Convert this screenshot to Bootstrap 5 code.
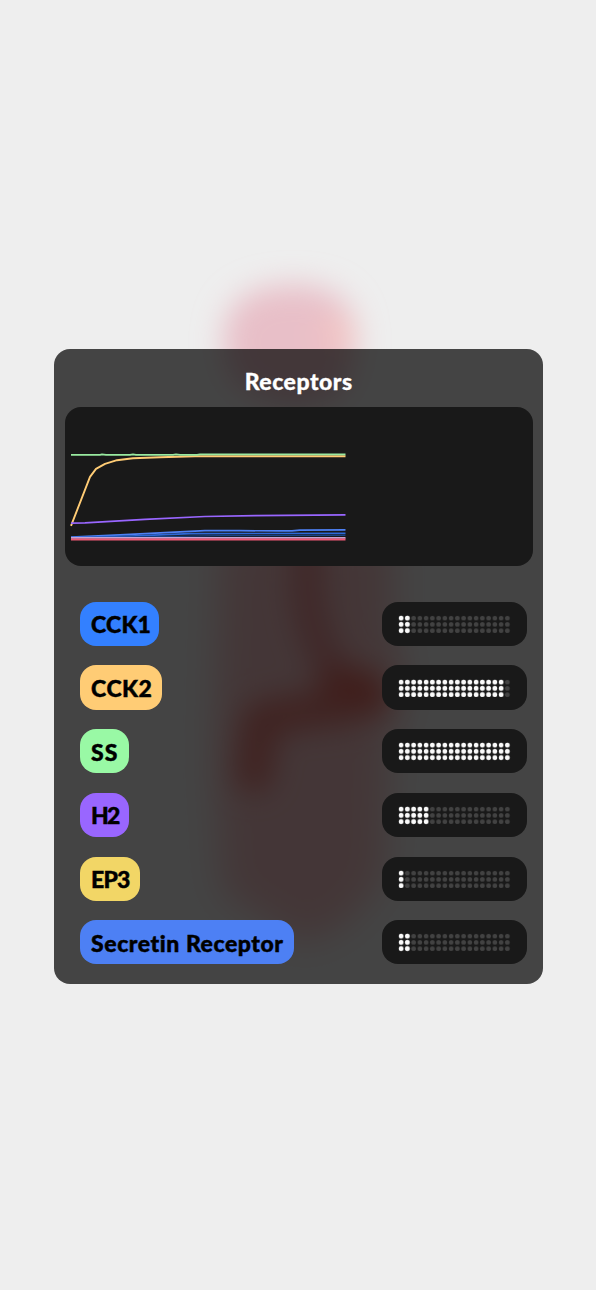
<!DOCTYPE html>
<html lang="en">
<head>
<meta charset="utf-8">
<meta name="viewport" content="width=device-width, initial-scale=1">
<title>Receptors</title>
<link href="https://cdn.jsdelivr.net/npm/bootstrap@5.3.0/dist/css/bootstrap.min.css" rel="stylesheet">
<style>
body{background:#eee;height:1290px;font-family:Lato,"Noto Sans",sans-serif;font-weight:900;overflow:hidden}
.stage{height:1290px;padding:348.7px 52.7px 0 54px}
.backdrop{left:0;top:0}
.panel{height:635.6px;background:rgba(0,0,0,.715);border-radius:16px;padding:0 10.5px}
.panel-title{height:58px;padding-top:7px;font-size:23px;line-height:1;font-weight:900;letter-spacing:.5px;color:#fff;-webkit-text-stroke:.3px #fff}
.chart{height:159px;background:#191919;border-radius:16px}
.rows{margin-top:36.1px;padding:0 5.4px 0 15.6px;gap:19.6px}
.pill{height:44.1px;border-radius:16px;font-size:23px;line-height:1;color:#000;padding:2px 0 0 11px;-webkit-text-stroke:.45px #000}
.meter{height:44.1px;width:145.3px;border-radius:16px;background:#191919;padding:1px 0 0 16.2px}
.cck1{width:79.1px;background:#3380ff;letter-spacing:.2px}
.cck2{width:82.1px;background:#ffcc75;letter-spacing:.5px}
.ss{width:49.1px;background:#99f9a5;letter-spacing:.9px}
.h2r{width:48.7px;background:#9966ff;letter-spacing:-1.8px}
.ep3{width:60.2px;background:#f2d666;letter-spacing:-.8px}
.secretin{width:214.1px;background:#4d80f4;letter-spacing:.55px}
.next{width:56px;background:#8585a8}
</style>
</head>
<body>
<svg class="backdrop position-absolute" width="596" height="1290" viewBox="0 0 596 1290" aria-hidden="true">
  <defs>
    <filter id="soft" x="-50%" y="-50%" width="200%" height="200%"><feGaussianBlur stdDeviation="15"/></filter>
    <filter id="wide" x="-50%" y="-50%" width="200%" height="200%"><feGaussianBlur stdDeviation="19"/></filter>
    <pattern id="off" width="6.25" height="6.25" patternUnits="userSpaceOnUse"><circle cx="3.125" cy="3.125" r="2.3" fill="#424242"/></pattern>
    <pattern id="on" width="6.25" height="6.25" patternUnits="userSpaceOnUse"><circle cx="3.125" cy="3.125" r="2.35" fill="#fafafa"/></pattern>
  </defs>
  <g filter="url(#soft)">
    <path d="M224 350C219 302 250 286 292 285C335 284 361 304 356 350L345 390Q290 425 232 380Z" fill="#e8bfc8"/>
    <ellipse cx="337" cy="335" rx="18" ry="20" fill="#f3c4c3"/>
  </g>
  <g filter="url(#wide)">
    <path d="M220 535H393V620L405 700L388 740L384 880L345 925L302 945L260 915L222 895L214 760Z" fill="#edbdc0"/>
  </g>
  <g filter="url(#soft)" fill="none" stroke-linecap="round" stroke-linejoin="round">
    <path d="M307 525V590Q311 640 338 677" stroke="#dc8788" stroke-width="29"/>
    <path d="M340 688L366 694" stroke="#dd6257" stroke-width="43"/>
    <path d="M346 707Q290 712 260 720L254 775" stroke="#dd7771" stroke-width="34"/>
  </g>
</svg>
<main class="stage position-relative">
  <section class="panel overflow-hidden d-flex flex-column">
    <h1 class="panel-title d-flex align-items-center justify-content-center m-0 flex-shrink-0">Receptors</h1>
    <div class="chart flex-shrink-0">
      <svg class="d-block" width="468" height="159" viewBox="65 407.1 468 159" fill="none" stroke-width="1.7" stroke-linejoin="round">
        <path d="M71 537.3L120 535L160 533L205 530.8H240L280 531H292L300 530.2L345.5 529.9" stroke="#4d80f4"/>
        <path d="M71 537.8L130 536.3L190 533.8L250 533.6L345.5 533.4" stroke="#2c68d8"/>
        <path d="M71 538L160 536.8L220 535.8L345.5 535.5" stroke="#174384" stroke-width="1.2"/>
        <path d="M71 538H345.5" stroke="#c6a2d2"/>
        <path d="M71 539.6H345.5" stroke="#ee5975" stroke-width="2"/>
        <path d="M71 526L90 477L96 469L105 464L117 460.3L133 458.4L160 457.3L195 456.4H345.5" stroke="#ffcc75" stroke-width="1.9"/>
        <path d="M71 523.3L85 523L145 519.4L205 516.6L255 515.8L345.5 515" stroke="#9966ff"/>
        <path d="M71 455H100L102 454.5L106 455H130L133 454.5L136 455H173L176 454.5L180 455H197L200 454.5H345.5" stroke="#99eaa0"/>
      </svg>
    </div>
    <div class="rows d-flex flex-column">
      <div class="d-flex justify-content-between"><div class="pill cck1 d-flex align-items-center">CCK1</div><div class="meter d-flex align-items-center"><svg width="112.5" height="18.75"><rect width="112.5" height="18.75" fill="url(#off)"/><rect width="12.5" height="18.75" fill="url(#on)"/></svg></div></div>
      <div class="d-flex justify-content-between"><div class="pill cck2 d-flex align-items-center">CCK2</div><div class="meter d-flex align-items-center"><svg width="112.5" height="18.75"><rect width="112.5" height="18.75" fill="url(#off)"/><rect width="106.25" height="18.75" fill="url(#on)"/></svg></div></div>
      <div class="d-flex justify-content-between"><div class="pill ss d-flex align-items-center">SS</div><div class="meter d-flex align-items-center"><svg width="112.5" height="18.75"><rect width="112.5" height="18.75" fill="url(#on)"/></svg></div></div>
      <div class="d-flex justify-content-between"><div class="pill h2r d-flex align-items-center">H2</div><div class="meter d-flex align-items-center"><svg width="112.5" height="18.75"><rect width="112.5" height="18.75" fill="url(#off)"/><rect width="31.25" height="18.75" fill="url(#on)"/></svg></div></div>
      <div class="d-flex justify-content-between"><div class="pill ep3 d-flex align-items-center">EP3</div><div class="meter d-flex align-items-center"><svg width="112.5" height="18.75"><rect width="112.5" height="18.75" fill="url(#off)"/><rect width="6.25" height="18.75" fill="url(#on)"/></svg></div></div>
      <div class="d-flex justify-content-between"><div class="pill secretin d-flex align-items-center text-nowrap">Secretin Receptor</div><div class="meter d-flex align-items-center"><svg width="112.5" height="18.75"><rect width="112.5" height="18.75" fill="url(#off)"/><rect width="12.5" height="18.75" fill="url(#on)"/></svg></div></div>
      <div class="d-flex justify-content-between"><div class="pill next"></div><div class="meter"></div></div>
    </div>
  </section>
</main>
<script src="https://cdn.jsdelivr.net/npm/bootstrap@5.3.0/dist/js/bootstrap.bundle.min.js"></script>
</body>
</html>
